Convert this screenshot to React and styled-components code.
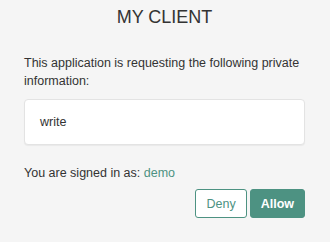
import React from 'react'
import styled, { createGlobalStyle } from 'styled-components'

const GlobalStyle = createGlobalStyle`
	html, body {
		margin: 0;
		padding: 0;
		background-color: #f5f5f5;
	}
	body {
		font-family: "Liberation Sans", Arial, Helvetica, sans-serif;
		color: #333;
	}
`

const Page = styled.div`
	width: 330px;
	height: 242px;
	box-sizing: border-box;
	padding: 0 25px 0 24px;
`

const Title = styled.h1`
	margin: 0;
	padding-top: 7px;
	font-size: 18px;
	font-weight: normal;
	line-height: 20px;
	text-align: center;
	color: #333;
`

const Intro = styled.p`
	margin: 27px 0 0;
	font-size: 12.5px;
	line-height: 18px;
`

const Scopes = styled.ul`
	list-style: none;
	margin: 9px 0 0;
	padding: 0;
	background-color: #fff;
	border: 1px solid #e3e3e3;
	border-radius: 4px;
	box-shadow: 0 1px 1px rgba(0, 0, 0, 0.05);
`

const Scope = styled.li`
	padding: 14px 15px;
	font-size: 12.5px;
	line-height: 16px;
`

const Signed = styled.p`
	margin: 19px 0 0;
	font-size: 12.5px;
	line-height: 18px;
`

const User = styled.a`
	color: #4d9282;
	text-decoration: none;
`

const Actions = styled.div`
	display: flex;
	justify-content: flex-end;
	gap: 3px;
	margin-top: 7px;
`

const Button = styled.button`
	margin: 0;
	height: 29px;
	padding: 0 10px;
	font-family: inherit;
	font-size: 12.5px;
	font-weight: ${p => (p.$primary ? 'bold' : 'normal')};
	color: ${p => (p.$primary ? '#fff' : '#4d9282')};
	background-color: ${p => (p.$primary ? '#4d9282' : '#fff')};
	border: 1px solid #4d9282;
	border-radius: 3px;
	cursor: pointer;
`

const App = () => {
	return (
		<Page>
			<GlobalStyle />
			<Title>MY CLIENT</Title>
			<Intro>This application is requesting the following private information:</Intro>
			<Scopes>
				<Scope>write</Scope>
			</Scopes>
			<Signed>
				You are signed in as: <User href="#">demo</User>
			</Signed>
			<Actions>
				<Button type="button">Deny</Button>
				<Button type="button" $primary>
					Allow
				</Button>
			</Actions>
		</Page>
	)
}

export default App
